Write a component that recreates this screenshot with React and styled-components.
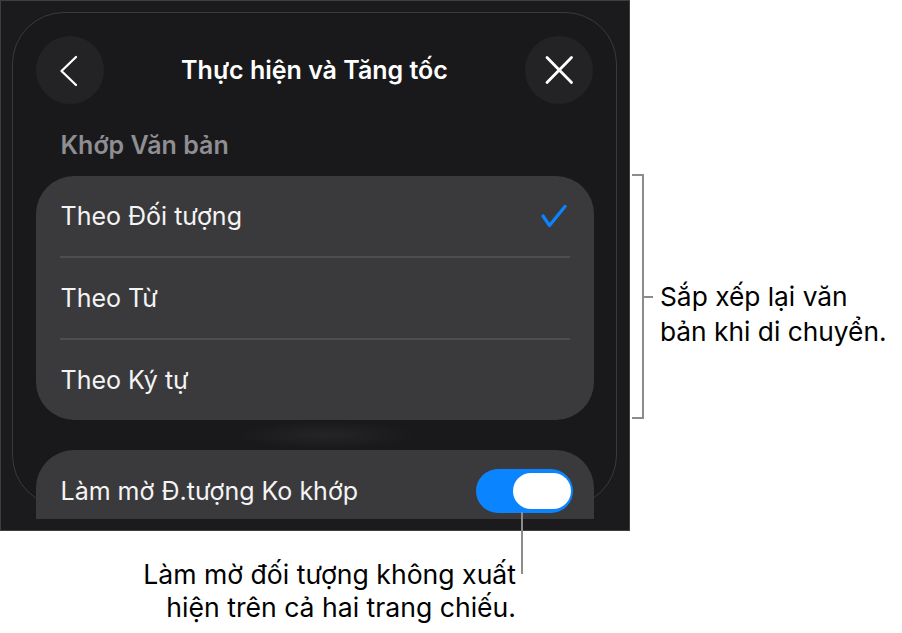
import React from "react";
import styled, { createGlobalStyle } from "styled-components";

const Global = createGlobalStyle`
  html, body { margin: 0; padding: 0; background: #ffffff; }
  body { font-family: Inter, "Noto Sans", "Liberation Sans", sans-serif; -webkit-font-smoothing: antialiased; }
`;

const Page = styled.div`
  position: relative;
  width: 902px;
  height: 633px;
  display: grid;
  grid-template-columns: 630px 1fr;
  grid-template-rows: 531px 1fr;
  overflow: hidden;
`;

const Panel = styled.div`
  box-sizing: border-box;
  background: #1b1b1d;
  border: 1px solid #3e3e40;
  padding: 11px 0 0 11px;
  overflow: hidden;
`;

const Sheet = styled.div`
  box-sizing: border-box;
  width: 605px;
  height: 495px;
  border: 1.5px solid #3a3a3c;
  border-radius: 52px;
  background: #19191b;
  padding: 22.5px 22.5px 0 22.5px;
  display: flex;
  flex-direction: column;
`;

const Header = styled.div`
  display: flex;
  align-items: center;
  justify-content: space-between;
  height: 68px;
  flex-shrink: 0;
`;

const RoundButton = styled.button`
  width: 68px;
  height: 68px;
  border-radius: 50%;
  border: none;
  padding: 0;
  background: #232325;
  display: flex;
  align-items: center;
  justify-content: center;
  color: #ffffff;
`;

const Title = styled.div`
  color: #ffffff;
  font-size: 25px;
  font-weight: 600;
`;

const SectionLabel = styled.div`
  height: 72px;
  box-sizing: border-box;
  padding: 27px 0 0 25px;
  color: #8e8e93;
  font-size: 25px;
  font-weight: 600;
  line-height: 28px;
  flex-shrink: 0;
`;

const Card = styled.div`
  background: #3a3a3c;
  border-radius: 38px;
  flex-shrink: 0;
`;

/* the last card is cut off by the bottom of the visible area */
const ClippedCard = styled(Card)`
  height: 69px;
  overflow: hidden;
  border-radius: 38px 38px 0 0;
`;

const Row = styled.div`
  box-sizing: border-box;
  height: ${(p) => p.$h}px;
  margin: 0 24px;
  padding: 0 3px 0 1px;
  display: flex;
  align-items: center;
  justify-content: space-between;
  border-top: ${(p) => (p.$divider ? "2px solid #4e4e51" : "none")};
  color: #f4f4f5;
  font-size: 25px;
  font-weight: 400;
`;

const Gap = styled.div`
  height: 30px;
  flex-shrink: 0;
  background: radial-gradient(ellipse 90px 14px at 52% 50%, rgba(255, 255, 255, 0.05), rgba(255, 255, 255, 0));
`;

const ToggleRow = styled(Row)`
  padding-right: 0;
  margin-right: 21px;
`;

const Switch = styled.div`
  box-sizing: border-box;
  width: 97px;
  height: 44px;
  border-radius: 22px;
  background: #0a84ff;
  padding: 4px 2px;
  display: flex;
  justify-content: ${(p) => (p.$on ? "flex-end" : "flex-start")};
`;

const Knob = styled.div`
  width: 58px;
  height: 36px;
  border-radius: 18px;
  background: #ffffff;
`;

const SideNote = styled.div`
  padding-top: 174px;
  padding-left: 2px;
  display: flex;
  align-items: flex-start;
`;

const Bracket = styled.div`
  box-sizing: border-box;
  width: 12px;
  height: 245px;
  border: 2px solid #8c8c8c;
  border-left: none;
  flex-shrink: 0;
`;

const NoteGroup = styled.div`
  display: flex;
  align-items: flex-start;
  margin-top: 105px;
`;

const Tick = styled.div`
  width: 9px;
  height: 2px;
  background: #8c8c8c;
  margin-top: 17px;
  flex-shrink: 0;
`;

const NoteText = styled.div`
  color: #000000;
  font-size: 26.3px;
  line-height: 35px;
  font-weight: 400;
  padding-left: 7px;
  white-space: nowrap;
`;

const BottomNote = styled(NoteText)`
  grid-column: 1 / 2;
  text-align: right;
  font-size: 26.6px;
  line-height: 33px;
  padding: 27px 114px 0 0;
`;

const Leader = styled.div`
  position: absolute;
  left: 521px;
  top: 512px;
  width: 2px;
  height: 62px;
  background: #8c8c8c;
`;

const rows = [
  { label: "Theo Đối tượng", selected: true, h: 80 },
  { label: "Theo Từ", h: 82 },
  { label: "Theo Ký tự", h: 82 },
];

export default function App() {
  return (
    <>
      <Global />
      <Page>
        <Panel>
          <Sheet>
            <Header>
              <RoundButton aria-label="Quay lại">
                <svg width="68" height="68" viewBox="0 0 68 68" fill="none">
                  <path d="M40 21 L25.5 35 L40 49" stroke="#fff" strokeWidth="2.3" strokeLinecap="round" strokeLinejoin="round" />
                </svg>
              </RoundButton>
              <Title>Thực hiện và Tăng tốc</Title>
              <RoundButton aria-label="Đóng">
                <svg width="68" height="68" viewBox="0 0 68 68" fill="none">
                  <path d="M22 21.5 L46.5 46.5 M46.5 21.5 L22 46.5" stroke="#fff" strokeWidth="2.8" strokeLinecap="round" />
                </svg>
              </RoundButton>
            </Header>
            <SectionLabel>Khớp Văn bản</SectionLabel>
            <Card>
              {rows.map((r, i) => (
                <Row key={r.label} $h={r.h} $divider={i > 0}>
                  <span>{r.label}</span>
                  {r.selected && (
                    <svg width="26" height="24" viewBox="0 0 26 24" fill="none">
                      <path d="M2 12 L8.5 21.5 L24 2.5" stroke="#0a84ff" strokeWidth="3.2" strokeLinecap="round" strokeLinejoin="round" />
                    </svg>
                  )}
                </Row>
              ))}
            </Card>
            <Gap />
            <ClippedCard>
              <ToggleRow $h={82}>
                <span>Làm mờ Đ.tượng Ko khớp</span>
                <Switch $on>
                  <Knob />
                </Switch>
              </ToggleRow>
            </ClippedCard>
          </Sheet>
        </Panel>
        <SideNote>
          <Bracket />
          <NoteGroup>
            <Tick />
            <NoteText>
              Sắp xếp lại văn
              <br />
              bản khi di chuyển.
            </NoteText>
          </NoteGroup>
        </SideNote>
        <BottomNote>
          Làm mờ đối tượng không xuất
          <br />
          hiện trên cả hai trang chiếu.
        </BottomNote>
        <Leader />
      </Page>
    </>
  );
}
